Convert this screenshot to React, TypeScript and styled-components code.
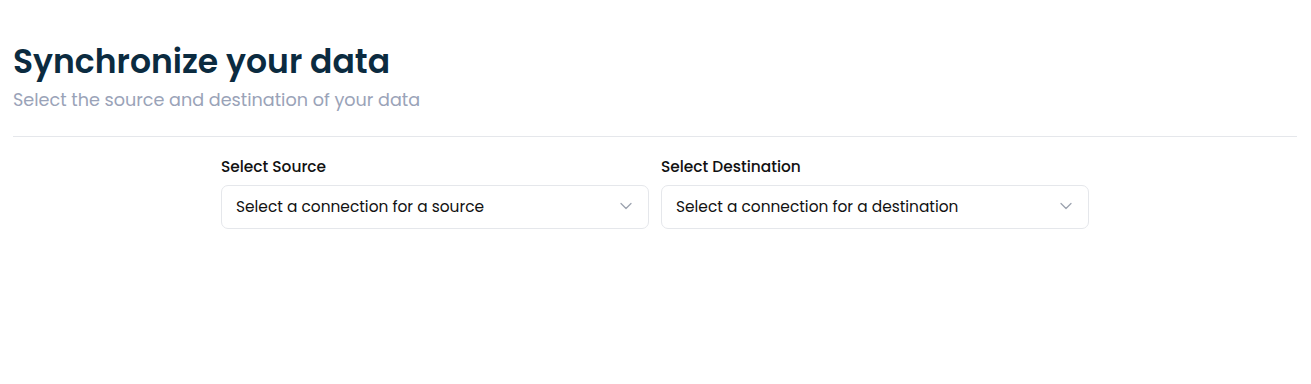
import React from 'react';
import styled, { createGlobalStyle } from 'styled-components';

const GlobalStyle = createGlobalStyle`
  body {
    margin: 0;
    background: #ffffff;
    font-family: Poppins, Inter, "Noto Sans", sans-serif;
  }
`;

const Page = styled.div`
  padding: 40px 14px 0 13px;
`;

const Header = styled.header`
  padding-bottom: 23px;
  border-bottom: 1px solid #e5e7eb;
`;

const Title = styled.h1`
  margin: 0;
  font-size: 33px;
  line-height: 44px;
  font-weight: 600;
  color: #0b2b40;
`;

const Subtitle = styled.p`
  margin: 3px 0 0;
  font-size: 17.6px;
  line-height: 26px;
  color: #9aa3b8;
`;

const Grid = styled.div`
  display: grid;
  grid-template-columns: 1fr 1fr;
  gap: 12px;
  max-width: 868px;
  margin: 19px auto 0;
`;

const Field = styled.div`
  display: flex;
  flex-direction: column;
  gap: 7px;
`;

const Label = styled.label`
  font-size: 15.4px;
  line-height: 22px;
  font-weight: 500;
  color: #111111;
`;

const SelectBox = styled.button`
  display: flex;
  align-items: center;
  justify-content: space-between;
  height: 44px;
  padding: 0 12px 2px 14px;
  border: 1px solid #e5e7eb;
  border-radius: 7px;
  background: #ffffff;
  font-family: inherit;
  font-size: 15.4px;
  color: #111111;
  text-align: left;
  cursor: pointer;
`;

const Chevron = () => (
  <svg width="20" height="20" viewBox="0 0 24 24" fill="none" stroke="#9ca3af" strokeWidth="1.5" strokeLinecap="round" strokeLinejoin="round">
    <path d="m6 9 6 6 6-6" />
  </svg>
);

const SelectField = ({ label, placeholder }: { label: string; placeholder: string }) => (
  <Field>
    <Label>{label}</Label>
    <SelectBox type="button">
      <span>{placeholder}</span>
      <Chevron />
    </SelectBox>
  </Field>
);

export default function App() {
  return (
    <>
      <GlobalStyle />
      <Page>
        <Header>
          <Title>Synchronize your data</Title>
          <Subtitle>Select the source and destination of your data</Subtitle>
        </Header>
        <Grid>
          <SelectField label="Select Source" placeholder="Select a connection for a source" />
          <SelectField label="Select Destination" placeholder="Select a connection for a destination" />
        </Grid>
      </Page>
    </>
  );
}
